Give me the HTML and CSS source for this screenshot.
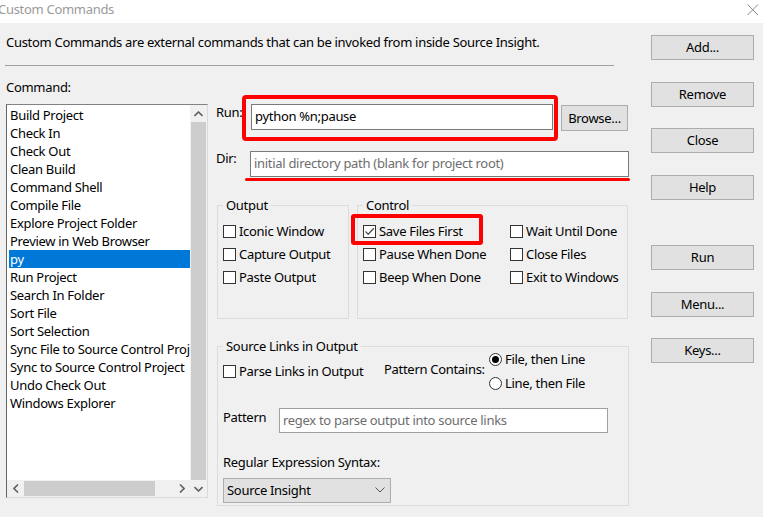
FILE: index.html
```html
<!DOCTYPE html>
<html>
<head>
<meta charset="utf-8">
<title>Custom Commands</title>
<link rel="stylesheet" href="styles.css">
</head>
<body>
<div class="titlebar">
  <span class="title">Custom Commands</span>
  <svg class="close" width="12" height="12" viewBox="0 0 12 12"><path d="M0.5 0.5 L11 11 M11 0.5 L0.5 11" stroke="#8a8a8a" stroke-width="1" fill="none"/></svg>
</div>
<div class="dialog">
  <div class="main">
    <p class="desc">Custom Commands are external commands that can be invoked from inside Source Insight.</p>
    <div class="sep"></div>
    <div class="content">
      <div class="cmdcol">
        <div class="cmdlabel">Command:</div>
        <div class="listbox">
          <ul class="items">
            <li>Build Project</li>
            <li>Check In</li>
            <li>Check Out</li>
            <li>Clean Build</li>
            <li>Command Shell</li>
            <li>Compile File</li>
            <li>Explore Project Folder</li>
            <li>Preview in Web Browser</li>
            <li class="sel">py</li>
            <li>Run Project</li>
            <li>Search In Folder</li>
            <li>Sort File</li>
            <li>Sort Selection</li>
            <li>Sync File to Source Control Project</li>
            <li>Sync to Source Control Project</li>
            <li>Undo Check Out</li>
            <li>Windows Explorer</li>
          </ul>
          <div class="vscroll">
            <div class="arrow"><svg width="9" height="6" viewBox="0 0 9 6"><path d="M0.5 5 L4.5 1 L8.5 5" stroke="#606060" stroke-width="1.6" fill="none"/></svg></div>
            <div class="vthumb"></div>
            <div class="arrow"><svg width="9" height="6" viewBox="0 0 9 6"><path d="M0.5 1 L4.5 5 L8.5 1" stroke="#606060" stroke-width="1.6" fill="none"/></svg></div>
          </div>
          <div class="hscroll">
            <div class="arrow"><svg width="6" height="9" viewBox="0 0 6 9"><path d="M5 0.5 L1 4.5 L5 8.5" stroke="#606060" stroke-width="1.6" fill="none"/></svg></div>
            <div class="hthumb"></div>
            <div class="htrack"></div>
            <div class="arrow"><svg width="6" height="9" viewBox="0 0 6 9"><path d="M1 0.5 L5 4.5 L1 8.5" stroke="#606060" stroke-width="1.6" fill="none"/></svg></div>
          </div>
        </div>
      </div>
      <div class="panel">
        <div class="runrow">
          <span class="lbl run-lbl">Run:</span>
          <div class="redbox"><div class="field run-field">python %n;pause</div></div>
          <button class="btn browse">Browse...</button>
        </div>
        <div class="dirrow">
          <span class="lbl dir-lbl">Dir:</span>
          <div class="field dir-field placeholder">initial directory path (blank for project root)</div>
        </div>
        <div class="underline"></div>
        <div class="groups">
          <fieldset class="group output">
            <legend>Output</legend>
            <div class="chk"><span class="box"></span><span>Iconic Window</span></div>
            <div class="chk"><span class="box"></span><span>Capture Output</span></div>
            <div class="chk"><span class="box"></span><span>Paste Output</span></div>
          </fieldset>
          <fieldset class="group control">
            <legend>Control</legend>
            <div class="ctlgrid">
              <div class="chk marked"><span class="box"><svg width="11" height="11" viewBox="0 0 11 11"><path d="M1.5 5.5 L4.2 8.2 L9.8 2.3" stroke="#505050" stroke-width="1.3" fill="none"/></svg></span><span>Save Files First</span><span class="redmark"></span></div>
              <div class="chk"><span class="box"></span><span>Wait Until Done</span></div>
              <div class="chk"><span class="box"></span><span>Pause When Done</span></div>
              <div class="chk"><span class="box"></span><span>Close Files</span></div>
              <div class="chk"><span class="box"></span><span>Beep When Done</span></div>
              <div class="chk"><span class="box"></span><span>Exit to Windows</span></div>
            </div>
          </fieldset>
        </div>
        <fieldset class="group links">
          <legend>Source Links in Output</legend>
          <div class="linkrow">
            <div class="chk parse"><span class="box"></span><span>Parse Links in Output</span></div>
            <span class="pc">Pattern Contains:</span>
            <div class="radios">
              <div class="radio"><span class="circle on"></span><span>File, then Line</span></div>
              <div class="radio"><span class="circle"></span><span>Line, then File</span></div>
            </div>
          </div>
          <div class="patrow">
            <span class="pat-lbl">Pattern</span>
            <div class="field pat-field placeholder">regex to parse output into source links</div>
          </div>
          <div class="rx-lbl">Regular Expression Syntax:</div>
          <div class="combo"><span>Source Insight</span><svg width="10" height="6" viewBox="0 0 10 6"><path d="M0.5 0.5 L5 5 L9.5 0.5" stroke="#555" stroke-width="1" fill="none"/></svg></div>
        </fieldset>
      </div>
    </div>
  </div>
  <div class="side">
    <button class="btn sbtn">Add...</button>
    <button class="btn sbtn">Remove</button>
    <button class="btn sbtn">Close</button>
    <button class="btn sbtn">Help</button>
    <button class="btn sbtn gap">Run</button>
    <button class="btn sbtn">Menu...</button>
    <button class="btn sbtn">Keys...</button>
  </div>
</div>
</body>
</html>
```

FILE: styles.css
```css
* { box-sizing: border-box; }
html, body {
  margin: 0;
  padding: 0;
}
body {
  width: 763px;
  height: 517px;
  overflow: hidden;
  background: #f0f0f0;
  font-family: "Noto Sans", "Open Sans", sans-serif;
  font-size: 13px;
  line-height: 18px;
  letter-spacing: -0.3px;
  color: #000;
}
.titlebar {
  height: 23px;
  background: #fff;
  display: flex;
  justify-content: space-between;
  align-items: flex-start;
}
.title {
  margin-left: -2px;
  margin-top: 0;
  color: #9a9a9a;
  font-size: 13px;
  line-height: 18px;
}
.close {
  margin-top: 4px;
  margin-right: 4px;
}
.dialog {
  display: flex;
  height: 494px;
}
.main {
  width: 640px;
  padding-left: 6px;
}
.desc {
  margin: 10px 0 0 0;
  white-space: nowrap;
}
.sep {
  margin: 14px 0 0 -1px;
  width: 609px;
  height: 1px;
  background: #a0a0a0;
}
.content {
  display: flex;
  align-items: flex-start;
}
.cmdcol {
  width: 202px;
}
.cmdlabel {
  margin-top: 12px;
}
.listbox {
  margin-top: 8px;
  width: 202px;
  height: 394px;
  background: #fff;
  border-top: 1px solid #828282;
  border-left: 1px solid #646464;
  border-right: 1px solid #dadada;
  border-bottom: 1px solid #dadada;
  display: grid;
  grid-template-columns: 183px 17px;
  grid-template-rows: 375px 17px;
}
.items {
  list-style: none;
  margin: 0;
  padding: 1px 0 0 2px;
  overflow: hidden;
  grid-column: 1;
  grid-row: 1;
}
.items li {
  height: 18px;
  line-height: 17px;
  padding: 1px 0 0 1px;
  white-space: nowrap;
}
.items li.sel {
  background: #0078d7;
  color: #fff;
}
.vscroll {
  grid-column: 2;
  grid-row: 1 / 3;
  display: flex;
  flex-direction: column;
  background: #f0f0f0;
}
.vscroll .arrow {
  height: 17px;
  display: flex;
  align-items: center;
  justify-content: center;
}
.vthumb {
  flex: 1;
  background: #cdcdcd;
  margin: 0 1px;
}
.hscroll {
  grid-column: 1;
  grid-row: 2;
  display: flex;
  background: #f0f0f0;
}
.hscroll .arrow {
  width: 17px;
  display: flex;
  align-items: center;
  justify-content: center;
}
.hthumb {
  width: 131px;
  background: #cdcdcd;
  margin: 1px 0;
}
.htrack {
  flex: 1;
}
.panel {
  margin-left: 8px;
  width: 413px;
  padding-top: 29px;
}
.runrow {
  display: flex;
  align-items: flex-start;
}
.lbl {
  white-space: nowrap;
}
.run-lbl {
  width: 26px;
  margin-top: 8px;
}
.redbox {
  border: 4px solid #ff0000;
  border-radius: 4px;
  padding: 5px 1px 7px 5px;
}
.field {
  background: #fff;
  border: 1px solid #7a7a7a;
  height: 26px;
  padding: 2px 0 0 3px;
  white-space: nowrap;
  overflow: hidden;
}
.placeholder {
  color: #6d6d6d;
}
.run-field {
  width: 302px;
}
.btn {
  font-family: inherit;
  font-size: 13px;
  letter-spacing: inherit;
  color: #000;
  background: #e1e1e1;
  border: 1px solid #adadad;
  border-radius: 0;
  padding: 0 0 1px 0;
  line-height: 18px;
}
.browse {
  margin-left: 3px;
  margin-top: 10px;
  width: 67px;
  height: 26px;
}
.dirrow {
  display: flex;
  align-items: flex-start;
  margin-top: 8px;
}
.dir-lbl {
  width: 34px;
}
.dir-field {
  margin-top: 2px;
  width: 379px;
  padding-top: 2px;
}
.underline {
  margin: 1px 0 0 29px;
  width: 385px;
  height: 3px;
  background: #ff0000;
  border-radius: 2px;
}
.groups {
  display: flex;
  margin-top: 16px;
}
.group {
  margin: 0;
  border: 1px solid #dcdcdc;
  padding: 0 5px;
  min-width: 0;
}
.group legend {
  padding: 0 3px;
  line-height: 16px;
}
.output {
  margin-left: 1px;
  width: 132px;
  height: 122px;
  padding-top: 7px;
}
.control {
  margin-left: 8px;
  width: 271px;
  height: 122px;
  padding-top: 7px;
}
.ctlgrid {
  display: grid;
  grid-template-columns: 147px 1fr;
}
.chk {
  display: flex;
  align-items: center;
  height: 23px;
  line-height: 17px;
  white-space: nowrap;
  position: relative;
}
.box {
  width: 13px;
  height: 13px;
  border: 1px solid #333;
  background: #fff;
  margin-right: 3px;
  flex: none;
  display: flex;
  align-items: center;
  justify-content: center;
}
.redmark {
  position: absolute;
  left: -12px;
  top: -6px;
  width: 132px;
  height: 31px;
  border: 4px solid #ff0000;
  border-radius: 3px;
}
.links {
  margin-left: 1px;
  margin-top: 19px;
  width: 412px;
  height: 168px;
}
.linkrow {
  display: flex;
  align-items: flex-start;
}
.parse {
  width: 161px;
  margin-top: 6px;
}
.pc {
  width: 105px;
  margin-top: 6px;
  white-space: nowrap;
}
.radios {
  margin-top: -7px;
}
.radio {
  display: flex;
  align-items: center;
  height: 24px;
  line-height: 17px;
  white-space: nowrap;
}
.circle {
  width: 13px;
  height: 13px;
  border: 1px solid #333;
  border-radius: 50%;
  background: #fff;
  margin-right: 3px;
  display: flex;
  align-items: center;
  justify-content: center;
}
.circle.on::after {
  content: "";
  width: 7px;
  height: 7px;
  border-radius: 50%;
  background: #000;
}
.patrow {
  display: flex;
  align-items: flex-start;
  margin-top: 13px;
}
.pat-lbl {
  width: 56px;
  margin-top: 0;
}
.pat-field {
  width: 329px;
  height: 25px;
  border-color: #a0a0a0;
}
.rx-lbl {
  margin-top: 20px;
}
.combo {
  margin-top: 7px;
  width: 168px;
  height: 25px;
  background: #e1e1e1;
  border: 1px solid #adadad;
  display: flex;
  align-items: center;
  justify-content: space-between;
  padding: 0 5px 1px 3px;
}
.side {
  padding-left: 11px;
  padding-top: 12px;
  display: flex;
  flex-direction: column;
  align-items: flex-start;
}
.sbtn {
  width: 103px;
  height: 25px;
  margin-bottom: 21.5px;
}
.sbtn.gap {
  margin-top: 24px;
}
```
